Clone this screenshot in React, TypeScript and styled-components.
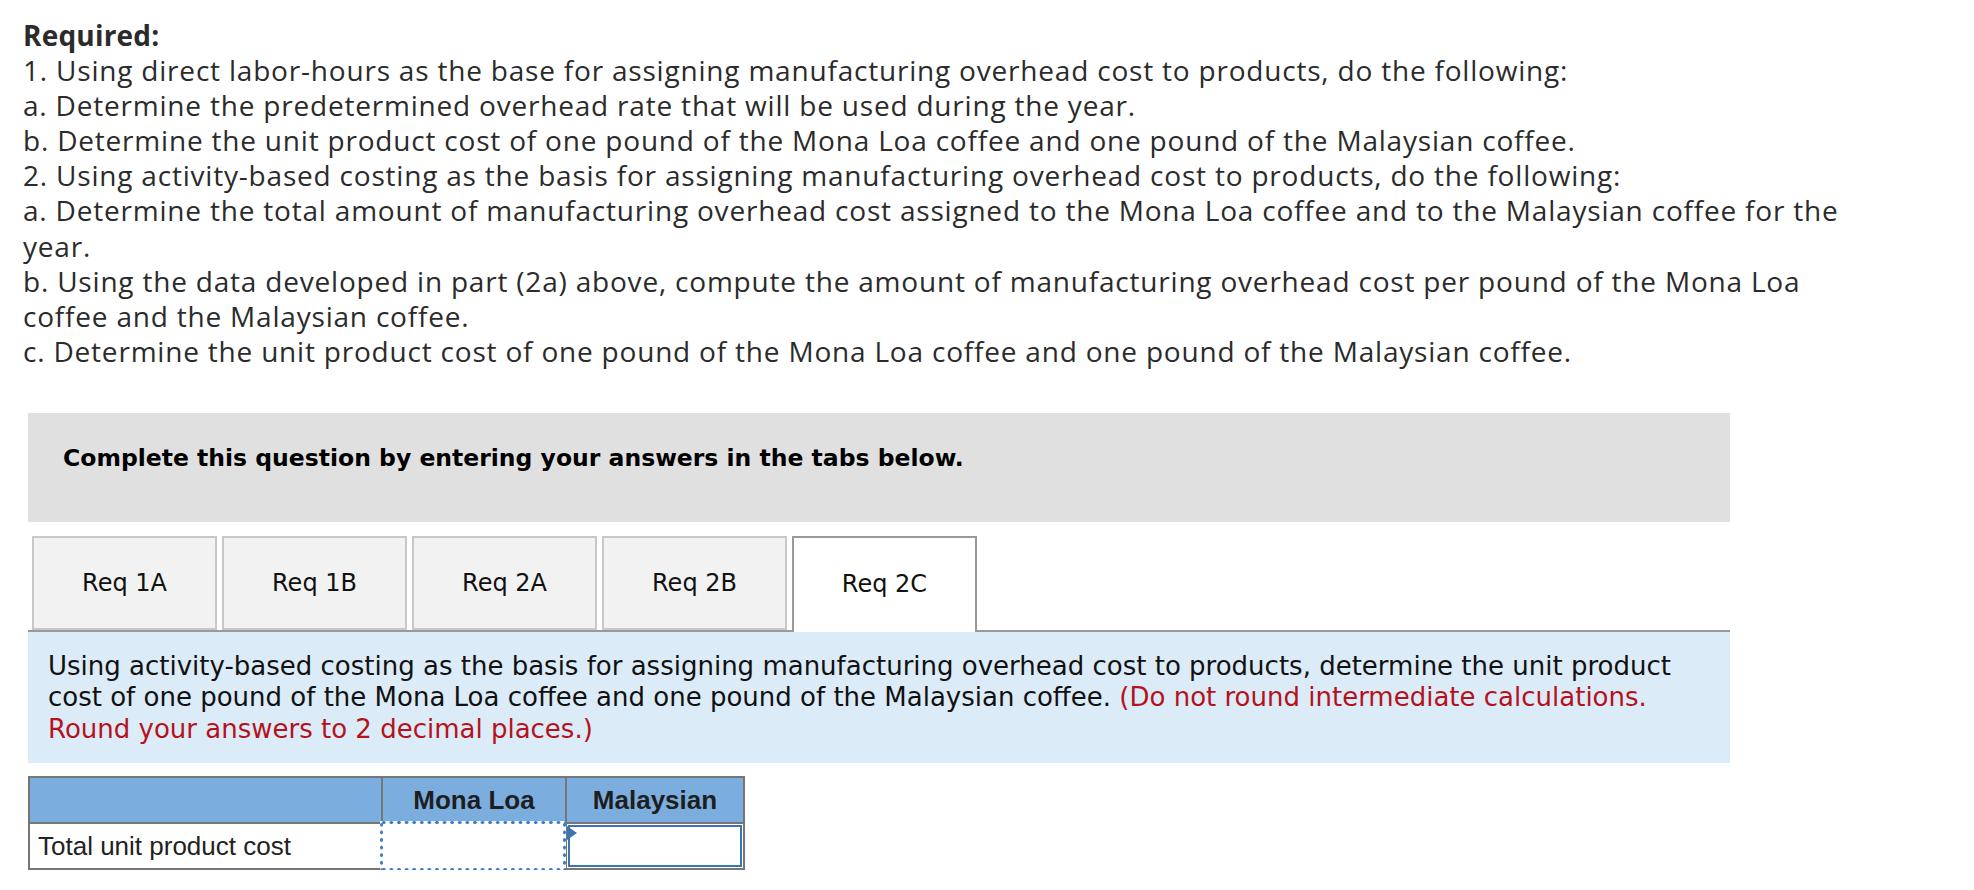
import React from "react";
import styled, { createGlobalStyle } from "styled-components";

const Global = createGlobalStyle`
  html, body { margin: 0; padding: 0; background: #ffffff; }
  body { font-family: "Open Sans", "Liberation Sans", sans-serif; }
`;

const Page = styled.div`
  padding: 18px 0 0 23px;
  width: 1900px;
`;

const Instructions = styled.div`
  font-family: "Open Sans", "Liberation Sans", sans-serif;
  font-size: 28px;
  letter-spacing: 0.8px;
  line-height: 35.1px;
  color: #2b2b2b;
  max-width: 1852px;
`;

const Heading = styled.div`
  font-weight: 700;
  letter-spacing: 0.2px;
`;

const Item = styled.div``;

const Answer = styled.div`
  margin: 44px 0 0 5px;
  width: 1702px;
`;

const Banner = styled.div`
  background: #e0e0e0;
  height: 109px;
  box-sizing: border-box;
  padding: 29px 35px 0;
  font-family: "DejaVu Sans", "Liberation Sans", sans-serif;
  font-weight: 700;
  font-size: 23.5px;
  line-height: 32px;
  color: #000;
`;

const TabBar = styled.div`
  display: flex;
  gap: 5px;
  margin-top: 14px;
  padding-left: 4px;
  border-bottom: 2px solid #999999;
  height: 94px;
`;

const Tab = styled.div<{ $active?: boolean }>`
  width: 185px;
  box-sizing: border-box;
  height: ${(p) => (p.$active ? "96px" : "94px")};
  margin-bottom: ${(p) => (p.$active ? "-2px" : "0")};
  border: 2px solid ${(p) => (p.$active ? "#999999" : "#c8c8c8")};
  border-bottom: ${(p) => (p.$active ? "none" : "2px solid #c8c8c8")};
  background: ${(p) => (p.$active ? "#ffffff" : "#f2f2f2")};
  display: flex;
  align-items: center;
  justify-content: center;
  font-family: "DejaVu Sans", sans-serif;
  font-size: 24px;
  color: #111;
  padding-bottom: ${(p) => (p.$active ? "2px" : "0")};
`;

const Prompt = styled.div`
  background: #dbebf8;
  padding: 19px 20px 18px;
  font-family: "DejaVu Sans", sans-serif;
  font-size: 26px;
  line-height: 31.5px;
  color: #111;
`;

const Note = styled.span`
  color: #b5121b;
`;

const Grid = styled.table`
  margin-top: 13px;
  border-collapse: collapse;
  border: 2px solid #767676;
  font-family: "Liberation Sans", Arial, sans-serif;
  font-size: 26px;
  color: #1e1e1e;
`;

const HeadCell = styled.th<{ $w: number }>`
  width: ${(p) => p.$w}px;
  height: 46px;
  box-sizing: border-box;
  background: #7badde;
  border: 2px solid #767676;
  padding: 0;
  text-align: center;
  font-weight: 700;
`;

const LabelCell = styled.td`
  height: 46px;
  box-sizing: border-box;
  border: 2px solid #767676;
  padding: 0 8px;
  text-align: left;
  background: #fff;
  color: #222;
`;

const InputCell = styled.td`
  position: relative;
  border: 2px solid #767676;
  padding: 0;
  background: #fff;
`;

const dot = "radial-gradient(circle, #3d7bc4 1.5px, transparent 1.9px)";

const DottedFocus = styled.div`
  position: absolute;
  left: -3px;
  top: -3px;
  right: -1px;
  bottom: -3px;
  background:
    ${dot} 0 0 / 7.6px 3px repeat-x,
    ${dot} 0 100% / 7.6px 3px repeat-x,
    ${dot} 0 0 / 3px 7.6px repeat-y,
    ${dot} 100% 0 / 3px 7.6px repeat-y,
    #ffffff;
`;

const ActiveBox = styled.div`
  position: absolute;
  inset: 1px 1px 1px 1px;
  border: 2px solid #3b74b3;
`;

const Pointer = styled.div`
  position: absolute;
  left: 0px;
  top: 2px;
  width: 0;
  height: 0;
  border-top: 7px solid transparent;
  border-bottom: 7px solid transparent;
  border-left: 10px solid #3b74b3;
`;

export default function App() {
  const tabs = ["Req 1A", "Req 1B", "Req 2A", "Req 2B", "Req 2C"];
  return (
    <>
      <Global />
      <Page>
        <Instructions>
          <Heading>Required:</Heading>
          <Item>
            1. Using direct labor-hours as the base for assigning manufacturing overhead cost to products, do the following:
          </Item>
          <Item>a. Determine the predetermined overhead rate that will be used during the year.</Item>
          <Item>
            b. Determine the unit product cost of one pound of the Mona Loa coffee and one pound of the Malaysian coffee.
          </Item>
          <Item>
            2. Using activity-based costing as the basis for assigning manufacturing overhead cost to products, do the following:
          </Item>
          <Item>
            a. Determine the total amount of manufacturing overhead cost assigned to the Mona Loa coffee and to the Malaysian coffee for the year.
          </Item>
          <Item>
            b. Using the data developed in part (2a) above, compute the amount of manufacturing overhead cost per pound of the Mona Loa coffee and the Malaysian coffee.
          </Item>
          <Item>
            c. Determine the unit product cost of one pound of the Mona Loa coffee and one pound of the Malaysian coffee.
          </Item>
        </Instructions>
        <Answer>
          <Banner>Complete this question by entering your answers in the tabs below.</Banner>
          <TabBar>
            {tabs.map((t, i) => (
              <Tab key={t} $active={i === tabs.length - 1}>
                {t}
              </Tab>
            ))}
          </TabBar>
          <Prompt>
            Using activity-based costing as the basis for assigning manufacturing overhead cost to products, determine the unit product cost of one pound of the Mona Loa coffee and one pound of the Malaysian coffee.{" "}
            <Note>(Do not round intermediate calculations. Round your answers to 2 decimal places.)</Note>
          </Prompt>
          <Grid>
            <thead>
              <tr>
                <HeadCell $w={353}></HeadCell>
                <HeadCell $w={184}>Mona Loa</HeadCell>
                <HeadCell $w={178}>Malaysian</HeadCell>
              </tr>
            </thead>
            <tbody>
              <tr>
                <LabelCell>Total unit product cost</LabelCell>
                <InputCell>
                  <DottedFocus />
                </InputCell>
                <InputCell>
                  <ActiveBox />
                  <Pointer />
                </InputCell>
              </tr>
            </tbody>
          </Grid>
        </Answer>
      </Page>
    </>
  );
}
